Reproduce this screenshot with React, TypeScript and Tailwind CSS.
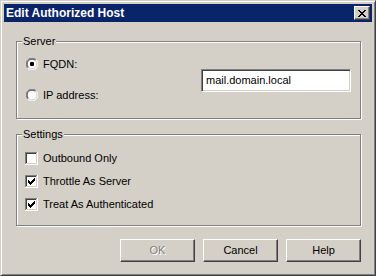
import React from "react";

const font = "font-['Liberation_Sans',Arial,sans-serif]";

const Radio = ({ checked }: { checked?: boolean }) => (
  <svg width="12" height="12" viewBox="0 0 12 12" className="shrink-0">
    <circle cx="6" cy="6" r="5.5" fill="#fff" />
    <path d="M1.8 10.2 A5.5 5.5 0 0 1 10.2 1.8" fill="none" stroke="#808080" strokeWidth="1" />
    <path d="M10.2 1.8 A5.5 5.5 0 0 1 1.8 10.2" fill="none" stroke="#fff" strokeWidth="1" />
    <path d="M2.5 9.5 A4.5 4.5 0 0 1 9.5 2.5" fill="none" stroke="#404040" strokeWidth="1" />
    <path d="M9.5 2.5 A4.5 4.5 0 0 1 2.5 9.5" fill="none" stroke="#d4d0c8" strokeWidth="1" />
    {checked && <rect x="4" y="4" width="4" height="4" rx="1" fill="#000" />}
  </svg>
);

const checkCols = [2, 3, 4, 3, 2, 1, 0];

const Checkbox = ({ checked }: { checked?: boolean }) => (
  <svg width="13" height="13" viewBox="0 0 13 13" className="shrink-0" shapeRendering="crispEdges">
    <rect x="0" y="0" width="13" height="13" fill="#fff" />
    <rect x="0" y="0" width="12" height="1" fill="#808080" />
    <rect x="0" y="0" width="1" height="12" fill="#808080" />
    <rect x="1" y="1" width="10" height="1" fill="#404040" />
    <rect x="1" y="1" width="1" height="10" fill="#404040" />
    <rect x="1" y="11" width="11" height="1" fill="#d4d0c8" />
    <rect x="11" y="1" width="1" height="11" fill="#d4d0c8" />
    {checked &&
      checkCols.map((top, i) => (
        <rect key={i} x={3 + i} y={3 + top} width="1" height="3" fill="#000" />
      ))}
  </svg>
);

const Button = ({ label, disabled }: { label: string; disabled?: boolean }) => (
  <div
    className={`w-[75px] h-[23px] flex items-center justify-center bg-[#d4d0c8] border border-t-white border-l-white border-r-[#404040] border-b-[#404040] shadow-[inset_-1px_-1px_0_#808080] text-[11px] ${
      disabled ? "text-[#808080] [text-shadow:1px_1px_0_#fff]" : "text-black"
    }`}
  >
    {label}
  </div>
);

const GroupBox = ({
  title,
  className,
  children,
}: {
  title: string;
  className: string;
  children: React.ReactNode;
}) => (
  <div
    className={`relative ml-[12px] w-[345px] border border-[#808080] shadow-[inset_1px_1px_0_#fff,1px_1px_0_#fff] ${className}`}
  >
    <span className="absolute -top-[7px] left-[5px] px-[1px] bg-[#d4d0c8] text-[11px] leading-[13px] text-black">
      {title}
    </span>
    {children}
  </div>
);

export default function App() {
  return (
    <div
      className={`w-[376px] h-[276px] bg-[#d4d0c8] border border-t-[#d4d0c8] border-l-[#d4d0c8] border-r-[#404040] border-b-[#404040] shadow-[inset_1px_1px_0_#fff,inset_-1px_-1px_0_#808080] p-[3px] flex flex-col ${font}`}
    >
      <div className="h-[18px] bg-[#0a246a] flex items-center justify-between pl-[2px] pr-[2px]">
        <span className="text-white font-bold text-[12px] leading-[14px]">
          Edit Authorized Host
        </span>
        <div className="w-[16px] h-[14px] bg-[#d4d0c8] border border-t-white border-l-white border-r-[#404040] border-b-[#404040] shadow-[inset_-1px_-1px_0_#808080] flex items-center justify-center">
          <svg width="8" height="7" viewBox="0 0 8 7" shapeRendering="crispEdges">
            <path
              d="M0 0h2v1h-2zM6 0h2v1h-2zM1 1h2v1h-2zM5 1h2v1h-2zM2 2h4v1h-4zM3 3h2v1h-2zM2 4h4v1h-4zM1 5h2v1h-2zM5 5h2v1h-2zM0 6h2v1h-2zM6 6h2v1h-2z"
              fill="#000"
            />
          </svg>
        </div>
      </div>

      <GroupBox title="Server" className="mt-[19px] h-[78px] flex">
        <div className="flex flex-col gap-[19px] pl-[9px] pt-[16px]">
          <div className="flex items-center gap-[5px] h-[12px] text-[11px] text-black">
            <Radio checked />
            <span>FQDN:</span>
          </div>
          <div className="flex items-center gap-[5px] h-[12px] text-[11px] text-black">
            <Radio />
            <span>IP address:</span>
          </div>
        </div>
        <div className="ml-auto mr-[9px] mt-[27px] w-[150px] h-[23px] bg-white border border-t-[#808080] border-l-[#808080] border-r-white border-b-white shadow-[inset_1px_1px_0_#404040,inset_-1px_-1px_0_#d4d0c8] flex items-center pl-[4px] text-[11px] text-black">
          mail.domain.local
        </div>
      </GroupBox>

      <GroupBox title="Settings" className="mt-[15px] h-[92px]">
        <div className="flex flex-col gap-[10px] pl-[8px] pt-[17px]">
          <div className="flex items-center gap-[5px] h-[13px] text-[11px] text-black">
            <Checkbox />
            <span>Outbound Only</span>
          </div>
          <div className="flex items-center gap-[5px] h-[13px] text-[11px] text-black">
            <Checkbox checked />
            <span>Throttle As Server</span>
          </div>
          <div className="flex items-center gap-[5px] h-[13px] text-[11px] text-black">
            <Checkbox checked />
            <span>Treat As Authenticated</span>
          </div>
        </div>
      </GroupBox>

      <div className="mt-[13px] flex justify-end gap-[8px] pr-[11px]">
        <Button label="OK" disabled />
        <Button label="Cancel" />
        <Button label="Help" />
      </div>
    </div>
  );
}
